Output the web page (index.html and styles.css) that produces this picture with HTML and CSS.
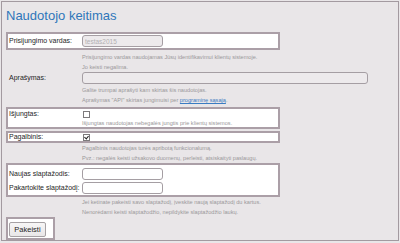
FILE: index.html
```html
<!DOCTYPE html>
<html lang="lt">
<head>
    <meta charset="UTF-8">
    <title>Naudotojo keitimas</title>
    <link rel="stylesheet" href="styles.css">
</head>
<body>
    <div class="page">
        <h1 class="title">Naudotojo keitimas</h1>
        <form class="user-form" onsubmit="return false">
            <div class="box boxed">
                <div class="line">
                    <label class="label" for="login">Prisijungimo vardas:</label>
                    <input type="text" id="login" class="input input-short" value="testas2015" disabled>
                </div>
            </div>
            <div class="help help-first">
                <p>Prisijungimo vardas naudojamas Jūsų identifikavimui klientų sistemoje.</p>
                <p>Jo keisti negalima.</p>
            </div>

            <div class="box plain">
                <div class="line line-tight">
                    <label class="label" for="descr">Aprašymas:</label>
                    <input type="text" id="descr" class="input input-long">
                </div>
            </div>
            <div class="help help-descr">
                <p>Galite trumpai aprašyti kam skirtas šis naudotojas.</p>
                <p>Aprašymas "API" skirtas jungimuisi per <a href="#" class="link">programinę sąsają</a>.</p>
            </div>

            <div class="box boxed box-disabled">
                <div class="line line-check">
                    <label class="label" for="off">Išjungtas:</label>
                    <input type="checkbox" id="off" class="check">
                </div>
                <div class="help help-inside">
                    <p>Išjungtas naudotojas nebegalės jungtis prie klientų sistemos.</p>
                </div>
            </div>

            <div class="box boxed box-sub">
                <div class="line line-check-small">
                    <label class="label" for="sub">Pagalbinis:</label>
                    <input type="checkbox" id="sub" class="check" checked>
                </div>
            </div>
            <div class="help">
                <p>Pagalbinis naudotojas turės apribotą funkcionalumą.</p>
                <p>Pvz.: negalės keisti užsakovo duomenų, perleisti, atsiskaityti paslaugų.</p>
            </div>

            <div class="box boxed box-pass">
                <div class="line">
                    <label class="label" for="pass1">Naujas slaptažodis:</label>
                    <input type="password" id="pass1" class="input input-short input-white">
                </div>
                <div class="line">
                    <label class="label" for="pass2">Pakartokite slaptažodį:</label>
                    <input type="password" id="pass2" class="input input-short input-white">
                </div>
            </div>
            <div class="help">
                <p>Jei ketinate pakeisti savo slaptažodį, įveskite naują slaptažodį du kartus.</p>
                <p>Nenorėdami keisti slaptažodžio, nepildykite slaptažodžio laukų.</p>
            </div>

            <div class="box boxed box-submit">
                <button type="submit" class="submit-btn">Pakeisti</button>
            </div>
        </form>
    </div>
</body>
</html>
```

FILE: styles.css
```css
:root {
    --page-bg: #e9e6e8;
    --page-border: #a39aa0;
    --box-border: #ab9fa7;
    --title-color: #2f76ba;
    --text-color: #1e1e1e;
    --help-color: #9a989a;
    --link-color: #3a7cc2;
    --input-border: #a59ea3;
}

html, body {
    margin: 0;
    padding: 0;
    background: var(--page-bg);
}

body {
    padding: 1px;
    font-family: 'Liberation Sans', Arial, sans-serif;
    color: var(--text-color);
}

.page {
    box-sizing: border-box;
    height: 240px;
    border: 1px solid var(--page-border);
    padding: 0 0 0 4px;
    overflow: hidden;
}

.title {
    margin: 6px 0 0 0;
    font-size: 13px;
    line-height: 16px;
    font-weight: normal;
    color: var(--title-color);
}

.user-form {
    margin-top: 8px;
}

/* bloko rėmelis */
.box {
    box-sizing: border-box;
    width: 274px;
}

.boxed {
    border: 2px solid var(--box-border);
    background: white;
}

.plain {
    padding: 0 2px;
}

.line {
    display: flex;
    align-items: center;
    height: 14px;
}

.line-tight {
    height: 12px;
}

.line-check {
    height: 10px;
}

.line-check-small {
    height: 8px;
}

.label {
    flex: none;
    box-sizing: border-box;
    width: 74px;
    padding-left: 1px;
    font-size: 7px;
    line-height: 8px;
    white-space: nowrap;
}

.input {
    flex: none;
    box-sizing: border-box;
    height: 12px;
    margin: 0;
    padding: 0 2px;
    border: 1px solid var(--input-border);
    border-radius: 3px;
    background: #edeaec;
    font-family: inherit;
    font-size: 6.5px;
    color: #b2b0b1;
}

.input-short {
    width: 81px;
}

.input-long {
    width: 286px;
}

.input-white {
    background: white;
}

.check {
    -webkit-appearance: none;
    appearance: none;
    position: relative;
    box-sizing: border-box;
    width: 7px;
    height: 7px;
    margin: 0 0 0 1px;
    border: 1px solid #7d7a7c;
    background: white;
}

.check:checked::after {
    content: "";
    position: absolute;
    left: 1px;
    top: 0;
    width: 2px;
    height: 3px;
    border: solid #222;
    border-width: 0 1px 1px 0;
    transform: rotate(40deg);
}

.help {
    padding-left: 76px;
    font-size: 5.6px;
    color: var(--help-color);
}

.help p {
    margin: 0;
    line-height: 10px;
    white-space: nowrap;
}

.help-first {
    margin-top: 2px;
}

.help-descr {
    margin-top: 1px;
}

.help-inside {
    padding-left: 74px;
}

.help-inside p {
    line-height: 7px;
    padding-top: 1px;
}

.link {
    color: var(--link-color);
}

.box-disabled {
    margin-top: 2px;
}

.box-sub {
    margin-top: 2px;
}

.box-pass {
    padding-top: 2px;
}

.box-submit {
    width: auto;
    display: inline-block;
    padding: 3px 7px 1px 1px;
    vertical-align: top;
}

.submit-btn {
    display: block;
    box-sizing: border-box;
    width: 37px;
    height: 15px;
    padding: 0;
    border: 1px solid #a6a1a4;
    border-radius: 2px;
    background: linear-gradient(#f7f6f6, #e9e7e8);
    font-family: inherit;
    font-size: 7.5px;
    color: var(--text-color);
    cursor: pointer;
}
```
